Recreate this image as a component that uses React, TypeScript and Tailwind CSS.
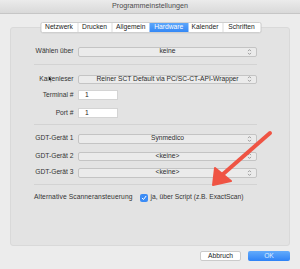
import React from 'react';

const tabs = ['Netzwerk', 'Drucken', 'Allgemein', 'Hardware', 'Kalender', 'Schriften'];
const tabWidths = ['w-[37px]', 'w-[34px]', 'w-[37.5px]', 'w-[38.5px]', 'w-[35px]', 'w-[37px]'];

function Chevron() {
  return (
    <svg width="5" height="7" viewBox="0 0 5 7" className="absolute right-[4px] top-1/2 -translate-y-1/2">
      <path d="M1 2.6 L2.5 1.1 L4 2.6 M1 4.4 L2.5 5.9 L4 4.4" fill="none" stroke="#8a8a8a" strokeWidth="0.8" />
    </svg>
  );
}

function Select({ value }: { value: string }) {
  return (
    <div className="relative w-[179px] h-[9.5px] rounded-[2px] border border-[#c4c4c4] bg-[#ebebeb] flex items-center justify-center text-[#2b2b2b]">
      <span className="leading-none">{value}</span>
      <Chevron />
    </div>
  );
}

function Row({ label, children, mt }: { label: string; children: React.ReactNode; mt: string }) {
  return (
    <div className={`flex items-center ${mt}`}>
      <div className="w-[62.5px] text-right text-[#333] leading-none whitespace-nowrap">{label}</div>
      <div className="ml-[4.5px]">{children}</div>
    </div>
  );
}

function Field({ value }: { value: string }) {
  return (
    <div className="w-[40px] h-[10px] bg-white border border-[#d4d4d4] flex items-center pl-[6px] text-[#222] leading-none">
      {value}
    </div>
  );
}

export default function App() {
  return (
    <div className="w-[300px] h-[269px] bg-[#ececec] flex flex-col overflow-hidden font-['Liberation_Sans',Arial,sans-serif] text-[6.7px]">
      {/* Title bar */}
      <div className="h-[14px] bg-gradient-to-b from-[#ebebeb] to-[#d9d9d9] border-b border-[#c6c6c6] flex items-center justify-center text-[#4c4c4c] text-[7.2px]">
        Programmeinstellungen
      </div>

      {/* Tabs */}
      <div className="flex justify-center mt-[8px] relative z-10">
        <div className="flex h-[11px] bg-white border border-[#cfcfcf] rounded-[2px] shadow-[0_0.5px_0.5px_rgba(0,0,0,0.08)] translate-x-[0.5px]">
          {tabs.map((t, i) => (
            <div
              key={t}
              className={`${tabWidths[i]} flex items-center justify-center leading-none ${
                t === 'Hardware'
                  ? 'bg-gradient-to-b from-[#5ca6fa] to-[#3488f6] text-white'
                  : 'text-[#222] ' + (i < tabs.length - 1 && tabs[i + 1] !== 'Hardware' ? 'border-r border-[#dcdcdc]' : '')
              }`}
            >
              {t}
            </div>
          ))}
        </div>
      </div>

      {/* Panel */}
      <div className="relative mx-[10px] -mt-[6px] h-[219px] bg-[#e3e3e3] border border-[#d9d9d9] rounded-[3px] pt-[19px]">
        <Row label="Wählen über" mt="mt-0">
          <Select value="keine" />
        </Row>
        <div className="ml-[23px] w-[223px] mt-[7px] border-t border-[#d3d3d3]" />
        <Row label="Kartenleser" mt="mt-[10px]">
          <Select value="Reiner SCT Default via PC/SC-CT-API-Wrapper" />
        </Row>
        <Row label="Terminal #" mt="mt-[6px]">
          <Field value="1" />
        </Row>
        <Row label="Port #" mt="mt-[8px]">
          <Field value="1" />
        </Row>
        <div className="ml-[23px] w-[223px] mt-[6px] border-t border-[#d3d3d3]" />
        <Row label="GDT-Gerät 1" mt="mt-[9px]">
          <Select value="Synmedico" />
        </Row>
        <Row label="GDT-Gerät 2" mt="mt-[8px]">
          <Select value="<keine>" />
        </Row>
        <Row label="GDT-Gerät 3" mt="mt-[7px]">
          <Select value="<keine>" />
        </Row>
        <div className="ml-[23px] w-[223px] mt-[6px] border-t border-[#d3d3d3]" />
        <div className="flex items-center ml-[23px] mt-[9px]">
          <span className="text-[#333] leading-none tracking-[0.1px]">Alternative Scanneransteuerung</span>
          <div className="ml-[7px] w-[8px] h-[8px] rounded-[2px] bg-[#3b8cf6] flex items-center justify-center">
            <svg width="6" height="6" viewBox="0 0 6 6">
              <path d="M1.2 3.2 L2.5 4.5 L4.9 1.3" fill="none" stroke="white" strokeWidth="1" strokeLinecap="round" strokeLinejoin="round" />
            </svg>
          </div>
          <span className="ml-[3px] text-[#333] leading-none">ja, über Script (z.B. ExactScan)</span>
        </div>

        {/* Mouse cursor */}
        <svg width="5" height="8" viewBox="0 0 5 8" className="absolute left-[37px] top-[47px]">
          <path d="M0.5 0.5 L0.5 6.5 L1.8 5.2 L2.8 7.4 L3.6 7 L2.7 4.9 L4.4 4.9 Z" fill="#111" stroke="white" strokeWidth="0.5" />
        </svg>

        {/* Red arrow */}
        <svg width="80" height="70" viewBox="0 0 80 70" className="absolute left-[185px] top-[98px]">
          <path d="M74 7 L26 49" fill="none" stroke="#ef5444" strokeWidth="4" strokeLinecap="round" />
          <path d="M17 59 L19 42 L35 55 Z" fill="#ef5444" stroke="#ef5444" strokeWidth="2" strokeLinejoin="round" />
        </svg>
      </div>

      {/* Buttons */}
      <div className="flex justify-end gap-[7px] mr-[10px] mt-[5px]">
        <div className="w-[41px] h-[10px] bg-white border border-[#cbcbcb] rounded-[2px] flex items-center justify-center text-[#222] leading-none">
          Abbruch
        </div>
        <div className="w-[42px] h-[10px] rounded-[2px] bg-gradient-to-b from-[#63abfb] to-[#2d82f6] flex items-center justify-center text-[#dfeeff] leading-none">
          OK
        </div>
      </div>
    </div>
  );
}
